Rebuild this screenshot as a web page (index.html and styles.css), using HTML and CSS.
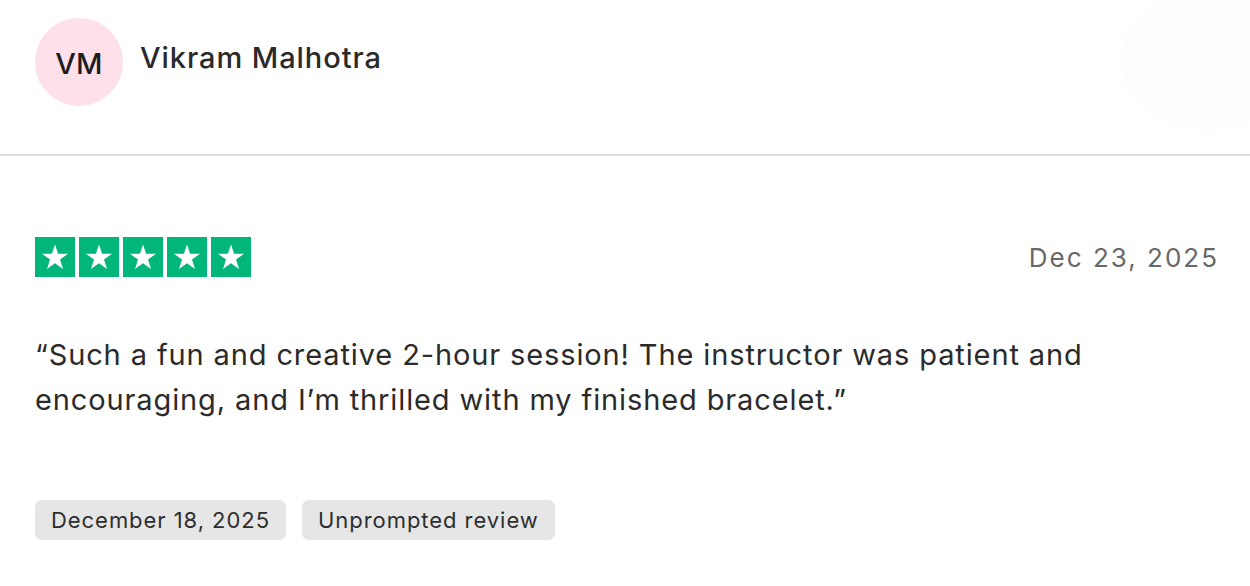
FILE: index.html
```html
<!DOCTYPE html>
<html lang="en">
<head>
<meta charset="utf-8">
<title>Review</title>
<link rel="stylesheet" href="styles.css">
</head>
<body>
<div class="card">
  <div class="watermark"></div>
  <header class="author">
    <div class="avatar">VM</div>
    <div class="name">Vikram Malhotra</div>
  </header>
  <hr class="divider">
  <section class="review">
    <div class="meta">
      <div class="stars">
        <span class="star"><svg viewBox="0 0 40 40"><polygon points="20,7.5 23.1,16.8 33,16.8 25,22.6 28,32 20,26.2 12,32 15,22.6 7,16.8 16.9,16.8" fill="#fff"/></svg></span>
        <span class="star"><svg viewBox="0 0 40 40"><polygon points="20,7.5 23.1,16.8 33,16.8 25,22.6 28,32 20,26.2 12,32 15,22.6 7,16.8 16.9,16.8" fill="#fff"/></svg></span>
        <span class="star"><svg viewBox="0 0 40 40"><polygon points="20,7.5 23.1,16.8 33,16.8 25,22.6 28,32 20,26.2 12,32 15,22.6 7,16.8 16.9,16.8" fill="#fff"/></svg></span>
        <span class="star"><svg viewBox="0 0 40 40"><polygon points="20,7.5 23.1,16.8 33,16.8 25,22.6 28,32 20,26.2 12,32 15,22.6 7,16.8 16.9,16.8" fill="#fff"/></svg></span>
        <span class="star"><svg viewBox="0 0 40 40"><polygon points="20,7.5 23.1,16.8 33,16.8 25,22.6 28,32 20,26.2 12,32 15,22.6 7,16.8 16.9,16.8" fill="#fff"/></svg></span>
      </div>
      <div class="date">Dec 23, 2025</div>
    </div>
    <p class="text">“Such a fun and creative 2-hour session! The instructor was patient and encouraging, and I’m thrilled with my finished bracelet.”</p>
    <div class="tags">
      <span class="tag">December 18, 2025</span>
      <span class="tag">Unprompted review</span>
    </div>
  </section>
</div>
</body>
</html>
```

FILE: styles.css
```css
* { box-sizing: border-box; }
html, body { margin: 0; padding: 0; background: #fff; }
body {
  font-family: Inter, "Noto Sans", "Liberation Sans", sans-serif;
  color: #262626;
}
.card {
  position: relative;
  width: 1250px;
  height: 586px;
  overflow: hidden;
  background: #fff;
}
.watermark {
  position: absolute;
  right: -40px;
  top: -10px;
  width: 170px;
  height: 140px;
  border-radius: 50%;
  background: #fdfdfe;
}
.author {
  position: relative;
  display: flex;
  gap: 17px;
  padding: 18px 35px 0;
  height: 154px;
  align-items: flex-start;
}
.avatar {
  width: 88px;
  height: 88px;
  border-radius: 50%;
  background: #fde0e9;
  display: flex;
  align-items: center;
  justify-content: center;
  font-size: 29px;
  font-weight: 500;
  color: #1c1c1c;
  letter-spacing: 0.3px;
  padding-top: 2px;
}
.name {
  font-size: 29px;
  font-weight: 500;
  color: #2a2a2a;
  margin-top: 22px;
  letter-spacing: 0.95px;
}
.divider {
  margin: 0;
  border: 0;
  height: 2px;
  background: #dedede;
}
.review {
  padding: 81px 33px 0 35px;
}
.meta {
  display: flex;
  justify-content: space-between;
  align-items: center;
  height: 40px;
}
.stars {
  display: flex;
  gap: 4px;
}
.star {
  width: 40px;
  height: 40px;
  background: #00b67a;
  display: block;
}
.star svg { width: 40px; height: 40px; display: block; }
.date {
  font-size: 26px;
  color: #686868;
  letter-spacing: 2px;
  margin-right: -2px;
}
.text {
  margin: 55px 0 0;
  font-size: 29px;
  line-height: 45px;
  color: #2b2b2b;
  max-width: 1100px;
  letter-spacing: 0.88px;
}
.tags {
  display: flex;
  gap: 16px;
  margin-top: 78px;
}
.tag {
  height: 40px;
  padding: 0 16px;
  background: #e6e6e6;
  border-radius: 7px;
  display: flex;
  align-items: center;
  font-size: 22px;
  color: #2e2e2e;
  letter-spacing: 0.95px;
}
```
